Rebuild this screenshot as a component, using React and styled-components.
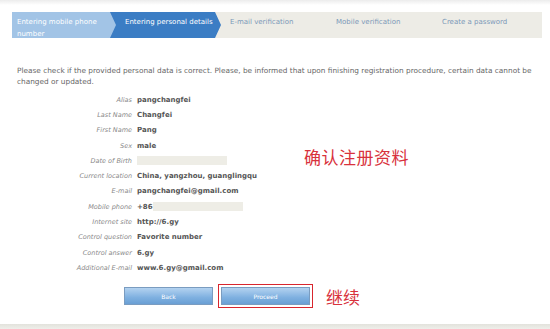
import React from 'react'
import styled, { createGlobalStyle } from 'styled-components'

const GlobalStyle = createGlobalStyle`
  html, body {
    margin: 0;
    padding: 0;
    background: #ffffff;
  }
  body {
    font-family: 'DejaVu Sans', Verdana, sans-serif;
  }
`

const Page = styled.div`
  width: 550px;
  height: 329px;
  position: relative;
  overflow: hidden;
  background: linear-gradient(#ececec 0, #ffffff 5px);
  display: flex;
  flex-direction: column;
`

const Steps = styled.div`
  display: flex;
  margin: 12px 7px 0 12px;
  height: 26px;
`

const Step = styled.div`
  flex: 0 0 ${(p) => p.w}px;
  margin-left: ${(p) => (p.first ? 0 : -7)}px;
  padding: 4px 8px 0 ${(p) => (p.first ? 5 : 15)}px;
  box-sizing: border-box;
  font-size: 7px;
  line-height: 12px;
  color: ${(p) => (p.state === 'todo' ? '#7b98b8' : '#ffffff')};
  background: ${(p) =>
    p.state === 'done' ? '#a2c4e6' : p.state === 'active' ? '#3b7dc4' : '#edece6'};
  clip-path: ${(p) =>
    p.first
      ? 'polygon(0 0, calc(100% - 6px) 0, 100% 50%, calc(100% - 6px) 100%, 0 100%)'
      : p.last
        ? 'polygon(0 0, 100% 0, 100% 100%, 0 100%, 6px 50%)'
        : 'polygon(0 0, calc(100% - 6px) 0, 100% 50%, calc(100% - 6px) 100%, 0 100%, 6px 50%)'};
`

const Intro = styled.p`
  margin: 27px 10px 0 17px;
  font-size: 7.35px;
  line-height: 11px;
  color: #666666;
`

const Body = styled.div`
  display: flex;
  margin-top: 5px;
`

const Details = styled.div`
  display: grid;
  grid-template-columns: 132px auto;
  column-gap: 5px;
  grid-auto-rows: 15.3px;
  align-items: center;
  width: 300px;
`

const Label = styled.div`
  text-align: right;
  font-style: italic;
  font-size: 6.5px;
  color: #888888;
`

const Value = styled.div`
  display: flex;
  align-items: center;
  font-weight: bold;
  font-size: 7px;
  color: #555555;
`

const Hidden = styled.span`
  display: inline-block;
  width: 90px;
  height: 9px;
  background: #eeede6;
`

const Note = styled.div`
  font-family: 'Noto Sans CJK SC', sans-serif;
  font-size: 17px;
  color: #d8323c;
  margin-top: 52px;
  margin-left: 4px;
  letter-spacing: 0.5px;
`

const Actions = styled.div`
  display: flex;
  align-items: center;
  margin-top: 8px;
  padding-left: 124px;
  gap: 5px;
`

const Highlight = styled.div`
  padding: 2px;
  border: 1px solid #d8262e;
  display: flex;
`

const Button = styled.button`
  width: 89px;
  height: 18px;
  border: 1px solid #7a9cc0;
  background: linear-gradient(#b3d2f0, #7eb0e0 60%, #6a9fd4);
  color: #ffffff;
  font-family: 'DejaVu Sans', Verdana, sans-serif;
  font-size: 6px;
  padding: 0;
  cursor: pointer;
`

const ActionNote = styled.span`
  font-family: 'Noto Sans CJK SC', sans-serif;
  font-size: 17px;
  color: #d8323c;
  margin-left: 8px;
`

const Footer = styled.div`
  margin-top: auto;
  height: 5px;
  background: linear-gradient(#e2e2dc, #efefea);
`

const steps = [
  { text: 'Entering mobile phone number', state: 'done', w: 105 },
  { text: 'Entering personal details', state: 'active', w: 112 },
  { text: 'E-mail verification', state: 'todo', w: 113 },
  { text: 'Mobile verification', state: 'todo', w: 113 },
  { text: 'Create a password', state: 'todo', w: 115 },
]

const rows = [
  ['Alias', 'pangchangfei'],
  ['Last Name', 'Changfei'],
  ['First Name', 'Pang'],
  ['Sex', 'male'],
  ['Date of Birth', null],
  ['Current location', 'China, yangzhou, guanglingqu'],
  ['E-mail', 'pangchangfei@gmail.com'],
  ['Mobile phone', '+86'],
  ['Internet site', 'http://6.gy'],
  ['Control question', 'Favorite number'],
  ['Control answer', '6.gy'],
  ['Additional E-mail', 'www.6.gy@gmail.com'],
]

export default function App() {
  return (
    <Page>
      <GlobalStyle />
      <Steps>
        {steps.map((s, i) => (
          <Step
            key={s.text}
            state={s.state}
            w={s.w}
            first={i === 0}
            last={i === steps.length - 1}
          >
            {s.text}
          </Step>
        ))}
      </Steps>
      <Intro>
        Please check if the provided personal data is correct. Please, be informed
        that upon finishing registration procedure, certain data cannot be changed
        or updated.
      </Intro>
      <Body>
        <Details>
          {rows.map(([label, value]) => (
            <React.Fragment key={label}>
              <Label>{label}</Label>
              <Value>
                {value}
                {(value === null || value === '+86') && <Hidden />}
              </Value>
            </React.Fragment>
          ))}
        </Details>
        <Note>确认注册资料</Note>
      </Body>
      <Actions>
        <Button>Back</Button>
        <Highlight>
          <Button>Proceed</Button>
        </Highlight>
        <ActionNote>继续</ActionNote>
      </Actions>
      <Footer />
    </Page>
  )
}
